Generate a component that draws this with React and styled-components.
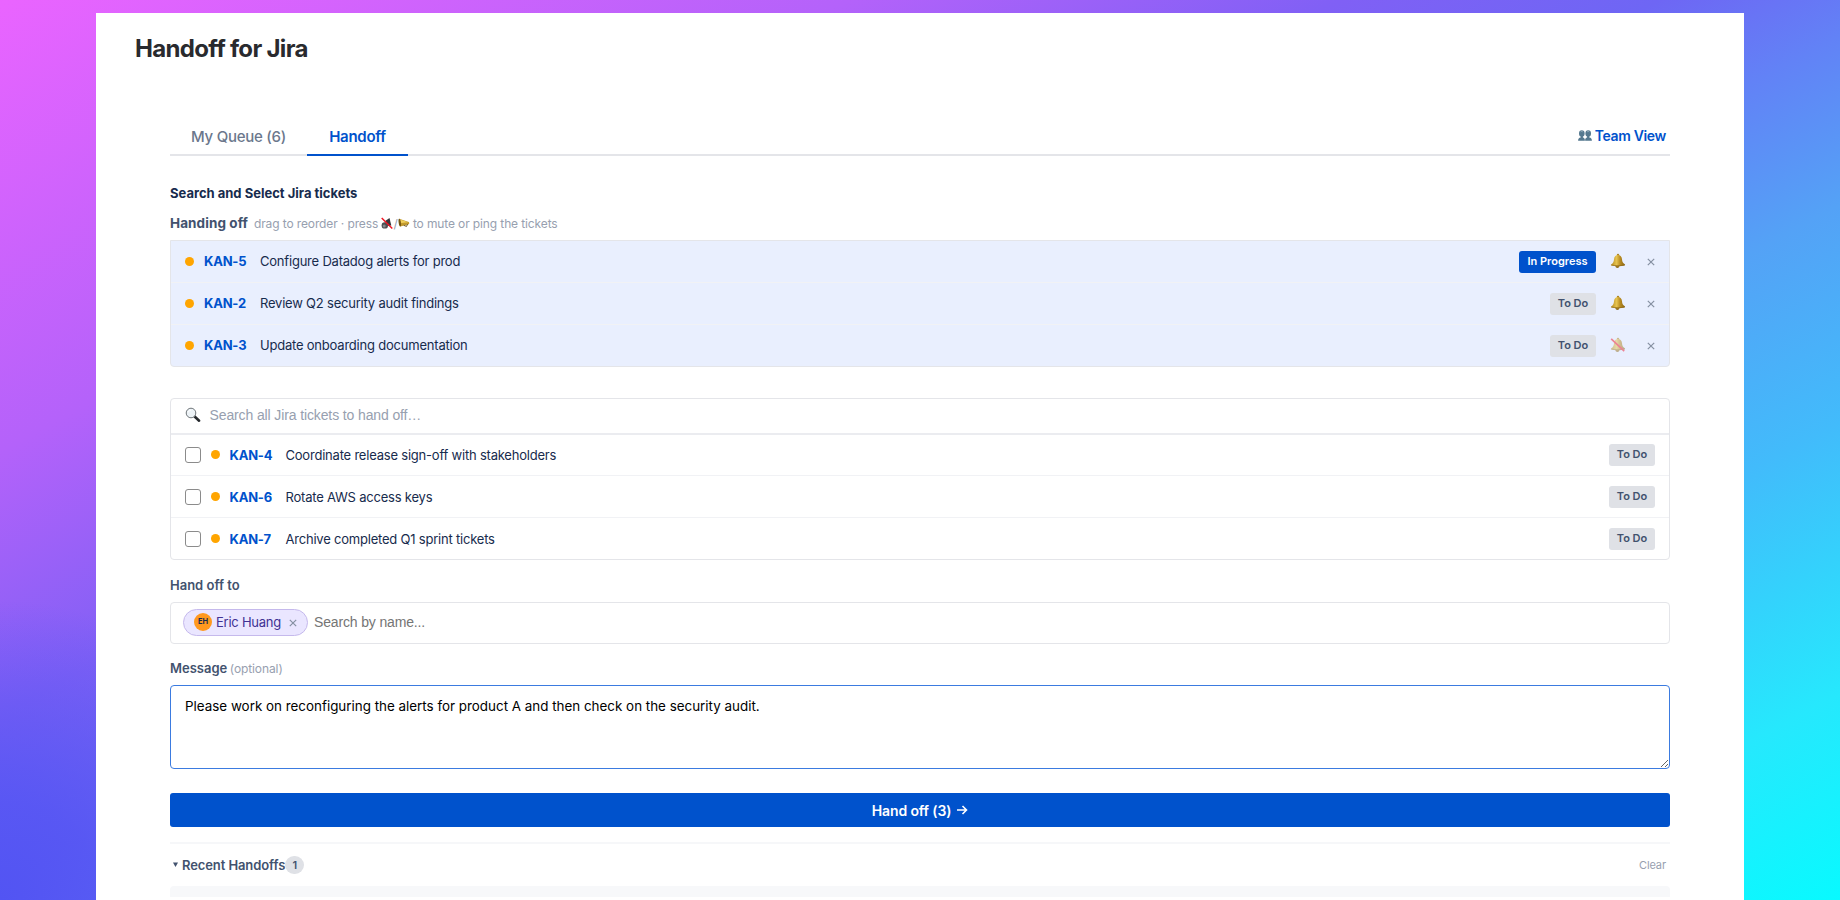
import styled, { createGlobalStyle } from 'styled-components';

const palette = {
  blue: '#0052cc',
  navy: '#172b4d',
  slate: '#42526e',
  gray: '#6b778c',
  mute: '#97a0af',
  line: '#e4e5e9',
  chip: '#dfe1e6',
  orange: '#ffa500',
};

const GlobalStyle = createGlobalStyle`
  * {
    box-sizing: border-box;
  }
  body {
    margin: 0;
    overflow: hidden;
    font-family: Inter, sans-serif;
    color: ${palette.navy};
  }
`;

const Page = styled.div`
  width: 1840px;
  height: 900px;
  padding: 13px 96px 0 96px;
  overflow: hidden;
  background:
    radial-gradient(circle at 0% 100%, rgba(82, 84, 243, 1) 0, rgba(82, 84, 243, 0.8) 100px, rgba(82, 84, 243, 0) 300px),
    linear-gradient(
      152deg,
      #ea64ff 0%,
      #b462fa 24%,
      #8060f5 38%,
      #6e66f4 47%,
      #6282f6 54%,
      #54a2f6 63%,
      #42bbfb 74.5%,
      #26e8fd 89%,
      #08faff 100%
    );
`;

const Panel = styled.main`
  width: 1648px;
  height: 887px;
  background: #fff;
`;

const Title = styled.h1`
  margin: 0;
  padding: 21px 0 0 39px;
  height: 101px;
  font-size: 24px;
  line-height: 30px;
  font-weight: 650;
  letter-spacing: -0.68px;
  color: #292a2e;
`;

const Content = styled.div`
  width: 1500px;
  margin-left: 74px;
`;

const TabBar = styled.div`
  display: flex;
  height: 42px;
  border-bottom: 2px solid ${palette.line};
`;

const Tab = styled.div`
  width: ${(props) => props.$width}px;
  height: 42px;
  padding-top: 12px;
  text-align: center;
  font-size: 15px;
  line-height: 22px;
  letter-spacing: -0.27px;
  font-weight: ${(props) => (props.$active ? 600 : 450)};
  color: ${(props) => (props.$active ? palette.blue : palette.gray)};
  border-bottom: 2px solid ${(props) => (props.$active ? palette.blue : 'transparent')};
`;

const TeamLink = styled.div`
  display: flex;
  align-items: center;
  gap: 3px;
  height: 24px;
  margin: 9px 4px 0 auto;
  font-size: 14px;
  font-weight: 600;
  letter-spacing: -0.35px;
  color: ${palette.blue};
`;

const Heading = styled.h2`
  margin: 27px 0 0;
  font-size: 13px;
  line-height: 20px;
  font-weight: 700;
`;

const SubHeading = styled.div`
  display: flex;
  align-items: center;
  height: 20px;
  margin-top: 10px;
  font-size: 12px;
  letter-spacing: -0.12px;
  color: ${palette.mute};

  b {
    font-size: 13.5px;
    font-weight: 700;
    letter-spacing: 0.08px;
    margin-right: 6px;
    color: ${palette.slate};
  }
  svg {
    flex: none;
  }
`;

const TicketList = styled.div`
  margin-top: ${(props) => props.$gap}px;
  border: 1px solid ${palette.line};
  border-radius: ${(props) => (props.$selected ? '0 0 4px 4px' : '4px')};
  background: ${(props) => (props.$selected ? '#e9effe' : '#fff')};
`;

const TicketRow = styled.div`
  display: flex;
  align-items: center;
  height: 42px;
  padding: 0 14px ${(props) => (props.$selectable ? 0 : 1)}px;
  font-size: 13px;
  border-bottom: 1px solid #f1f2f5;

  &:last-child {
    height: 41px;
    border-bottom: none;
  }
`;

const Checkbox = styled.span`
  width: 16px;
  height: 16px;
  margin-right: 9.5px;
  border: 1.5px solid #8b8b8b;
  border-radius: 3px;
  background: #fff;
`;

const Dot = styled.span`
  width: 9px;
  height: 9px;
  margin-right: 10px;
  border-radius: 50%;
  background: ${palette.orange};
`;

const TicketKey = styled.span`
  width: 56px;
  font-weight: 700;
  letter-spacing: -0.2px;
  color: ${palette.blue};
`;

const TicketName = styled.span`
  flex: 1;
  letter-spacing: -0.21px;
`;

const Status = styled.span`
  width: ${(props) => (props.$active ? 77 : 46)}px;
  height: 22px;
  margin-top: 1px;
  border-radius: 3px;
  text-align: center;
  font-size: 11px;
  line-height: 21px;
  font-weight: 600;
  color: ${(props) => (props.$active ? '#fff' : palette.slate)};
  background: ${(props) => (props.$active ? palette.blue : palette.chip)};
`;

const BellButton = styled.span`
  display: flex;
  width: 16px;
  margin: 0 21px 0 14px;
  opacity: ${(props) => (props.$muted ? 0.5 : 1)};

  & + svg {
    margin-top: 2px;
  }
`;

const SearchBar = styled.div`
  display: flex;
  align-items: center;
  gap: 8.5px;
  height: 36px;
  margin-bottom: -1px;
  padding: 0 0 2px 14px;
  font-family: 'Liberation Sans', sans-serif;
  font-size: 14px;
  letter-spacing: -0.12px;
  color: ${palette.mute};
  border-bottom: 2px solid #ebecf0;
`;

const Label = styled.div`
  height: 20px;
  margin-top: ${(props) => props.$gap}px;
  font-size: 13px;
  line-height: 20px;
  font-weight: 600;
  color: ${palette.slate};

  span {
    margin-left: 2.5px;
    font-size: 12px;
    font-weight: 400;
    letter-spacing: -0.1px;
    color: ${palette.mute};
  }
`;

const PeopleField = styled.div`
  display: flex;
  align-items: center;
  gap: 6px;
  height: 42px;
  margin-top: 7px;
  padding: 0 0 2px 12px;
  border: 1px solid ${palette.line};
  border-radius: 4px;
  font-family: 'Liberation Sans', sans-serif;
  font-size: 14px;
  letter-spacing: -0.15px;
  color: #757575;
`;

const Person = styled.span`
  display: flex;
  align-items: center;
  width: 125px;
  height: 27px;
  padding-left: 10px;
  border: 1px solid #c5b9ec;
  border-radius: 14px;
  font-family: Inter, sans-serif;
  font-size: 13px;
  letter-spacing: -0.25px;
  color: #403294;
  background: #eae6ff;

  svg {
    margin: 2px 0 0 8px;
  }
`;

const Avatar = styled.span`
  width: 18px;
  height: 18px;
  margin-right: 4px;
  border-radius: 50%;
  text-align: center;
  font-size: 7.5px;
  line-height: 18px;
  font-weight: 700;
  letter-spacing: 0;
  color: ${palette.navy};
  background: #ff991f;
`;

const Message = styled.textarea`
  display: block;
  width: 1500px;
  height: 84px;
  margin: 7px 0 24px;
  padding: 10px 14px;
  border: 1.5px solid #3b7be0;
  border-radius: 4px;
  outline: none;
  resize: vertical;
  font-family: inherit;
  font-size: 13.4px;
  line-height: 20px;
  color: #000;
`;

const Submit = styled.button`
  display: flex;
  align-items: center;
  justify-content: center;
  gap: 5px;
  width: 1500px;
  height: 34px;
  padding: 0;
  border: none;
  border-radius: 3px;
  font-family: inherit;
  font-size: 14px;
  font-weight: 600;
  letter-spacing: -0.12px;
  color: #fff;
  background: ${palette.blue};
`;

const Recent = styled.div`
  display: flex;
  align-items: center;
  height: 44px;
  margin-top: 15px;
  padding: 0 4px 1px 3px;
  border-top: 2px solid #f6f7f9;
  font-size: 13px;
  font-weight: 600;
  letter-spacing: -0.1px;
  color: ${palette.slate};

  svg {
    margin-right: 4px;
  }
`;

const Count = styled.span`
  width: 19px;
  height: 18px;
  border-radius: 9px;
  text-align: center;
  font-size: 11px;
  line-height: 18px;
  background: ${palette.chip};
`;

const Clear = styled.span`
  margin-left: auto;
  font-size: 11px;
  font-weight: 400;
  color: ${palette.mute};
`;

const RecentCard = styled.div`
  height: 11px;
  border-radius: 4px 4px 0 0;
  background: #f7f8fa;
`;

const PeopleIcon = () => (
  <svg width="14" height="13" viewBox="0 0 14 13">
    <g fill="#54788f">
      <ellipse cx="10.2" cy="4.4" rx="2.8" ry="3.2" />
      <path d="M7.1 11.8C7.1 9.7 7.7 9 9.1 8.6V6.8h2.2v1.8c1.8.4 2.5 1.1 2.6 3.2Z" />
      <ellipse cx="3.8" cy="4.4" rx="2.8" ry="3.2" />
      <path d="M.1 11.8C.2 9.7.9 9 2.7 8.6V6.8h2.2v1.8c1.4.4 2 1.1 2 3.2Z" />
    </g>
    <path d="M2.7 2.8q1-.9 2 0M9.2 2.8q1-.9 2 0" stroke="#a9bfcc" strokeWidth=".7" fill="none" />
  </svg>
);

const Bell = ({ muted }) => (
  <svg width="16" height="16" viewBox="0 0 16 16">
    <defs>
      <linearGradient id="brass" x1="0" x2="1" y1="0" y2="0">
        <stop offset="0" stopColor="#b48a20" />
        <stop offset=".4" stopColor="#e6c350" />
        <stop offset=".65" stopColor="#b88c22" />
        <stop offset="1" stopColor="#8a6412" />
      </linearGradient>
    </defs>
    <circle cx="8" cy="1.9" r="1.2" fill="#ad8524" />
    <ellipse cx="7.4" cy="13.6" rx="1.9" ry="1.3" fill="#8f6a18" />
    <path
      d="M8 1.9c2.5 0 3.8 1.7 4 4.3.2 2.6.8 3.7 2.8 5.1.5.5.3 1.1-.3 1.3-3.8.8-8.8.8-13 0-.6-.2-.8-.8-.3-1.2C3.2 10 3.8 8.9 4 6.2 4.2 3.6 5.5 1.9 8 1.9Z"
      fill="url(#brass)"
    />
    <path d="M1.5 12.1c3.9.8 9 .8 12.9 0" stroke="#8c6717" strokeWidth=".7" fill="none" />
    {muted && <path d="m1.2 1.8 13 12.4" stroke="#f0182c" strokeWidth="1.6" />}
  </svg>
);

const MuteIcon = () => (
  <svg width="12" height="13" viewBox="0 0 12 13">
    <path d="M4.5 3.8 8.5 1l1.8 7.5-4.6.4Z" fill="#33373a" />
    <circle cx="3.8" cy="8.4" r="3.2" fill="#4b4f52" />
    <circle cx="3.2" cy="9" r="1.5" fill="#85898c" />
    <path d="m.7 1 10.6 10.5" stroke="#ee1624" strokeWidth="1.5" />
  </svg>
);

const HornIcon = () => (
  <svg width="12" height="12" viewBox="0 0 13 12">
    <path d="M1.2 1.3 11.8 4.8q.9 1.3-.1 2.5L2.5 9.9Z" fill="#c29a2c" />
    <path d="M2 2.3 11 5.3 3.5 6Z" fill="#f0cf5c" />
    <ellipse cx="1.9" cy="5.6" rx="1.2" ry="4.3" transform="rotate(-8 1.9 5.6)" fill="#755612" />
    <path d="M6.2 8.5 9.2 9.7l1.2-2.5" fill="none" stroke="#624a13" strokeWidth="1" />
  </svg>
);

const SearchIcon = () => (
  <svg width="16" height="16" viewBox="0 0 16 16">
    <path d="m9.6 9.5 4.5 4.2" stroke="#24282c" strokeWidth="2.6" strokeLinecap="round" />
    <circle cx="6" cy="6" r="4.8" fill="#edf3f7" stroke="#6e7478" strokeWidth="1" />
    <path d="M3.2 5.4Q3.8 3.2 6 3" stroke="#fff" strokeWidth="1" fill="none" />
  </svg>
);

const Cross = () => (
  <svg width="8" height="8" viewBox="0 0 8 8">
    <path d="m.8.8 6.4 6.4m0-6.4L.8 7.2" stroke="#8590a2" strokeWidth="1.2" />
  </svg>
);

const selected = [
  { id: 'KAN-5', name: 'Configure Datadog alerts for prod', status: 'In Progress' },
  { id: 'KAN-2', name: 'Review Q2 security audit findings', status: 'To Do' },
  { id: 'KAN-3', name: 'Update onboarding documentation', status: 'To Do', muted: true },
];

const available = [
  { id: 'KAN-4', name: 'Coordinate release sign-off with stakeholders', status: 'To Do' },
  { id: 'KAN-6', name: 'Rotate AWS access keys', status: 'To Do' },
  { id: 'KAN-7', name: 'Archive completed Q1 sprint tickets', status: 'To Do' },
];

const Ticket = ({ ticket, selectable }) => (
  <TicketRow $selectable={selectable}>
    {selectable && <Checkbox />}
    <Dot />
    <TicketKey>{ticket.id}</TicketKey>
    <TicketName>{ticket.name}</TicketName>
    <Status $active={ticket.status === 'In Progress'}>{ticket.status}</Status>
    {!selectable && (
      <>
        <BellButton $muted={ticket.muted}>
          <Bell muted={ticket.muted} />
        </BellButton>
        <Cross />
      </>
    )}
  </TicketRow>
);

const App = () => {
  return (
    <Page>
      <GlobalStyle />
      <Panel>
        <Title>Handoff for Jira</Title>
        <Content>
          <TabBar>
            <Tab $width={137}>My Queue (6)</Tab>
            <Tab $width={101} $active>
              Handoff
            </Tab>
            <TeamLink>
              <PeopleIcon />
              <span>Team View</span>
            </TeamLink>
          </TabBar>
          <Heading>Search and Select Jira tickets</Heading>
          <SubHeading>
            <b>Handing off</b>
            <span>drag to reorder · press&nbsp;</span>
            <MuteIcon />
            <span>/</span>
            <HornIcon />
            <span>&nbsp;to mute or ping the tickets</span>
          </SubHeading>
          <TicketList $gap={7} $selected>
            {selected.map((ticket) => (
              <Ticket key={ticket.id} ticket={ticket} />
            ))}
          </TicketList>
          <TicketList $gap={31}>
            <SearchBar>
              <SearchIcon />
              <span>Search all Jira tickets to hand off…</span>
            </SearchBar>
            {available.map((ticket) => (
              <Ticket key={ticket.id} ticket={ticket} selectable />
            ))}
          </TicketList>
          <Label $gap={15}>Hand off to</Label>
          <PeopleField>
            <Person>
              <Avatar>EH</Avatar>
              Eric Huang
              <Cross />
            </Person>
            <span>Search by name...</span>
          </PeopleField>
          <Label $gap={14}>
            Message<span>(optional)</span>
          </Label>
          <Message
            spellCheck={false}
            defaultValue="Please work on reconfiguring the alerts for product A and then check on the security audit."
          />
          <Submit>
            <span>Hand off (3)</span>
            <svg width="12" height="12" viewBox="0 0 12 12">
              <path d="M1 6h9.5M6.5 2l4 4-4 4" fill="none" stroke="#fff" strokeWidth="1.6" />
            </svg>
          </Submit>
          <Recent>
            <svg width="5" height="5" viewBox="0 0 5 5">
              <path d="M0 .5h5L2.5 5Z" fill={palette.slate} />
            </svg>
            Recent Handoffs
            <Count>1</Count>
            <Clear>Clear</Clear>
          </Recent>
          <RecentCard />
        </Content>
      </Panel>
    </Page>
  );
};

export default App;
